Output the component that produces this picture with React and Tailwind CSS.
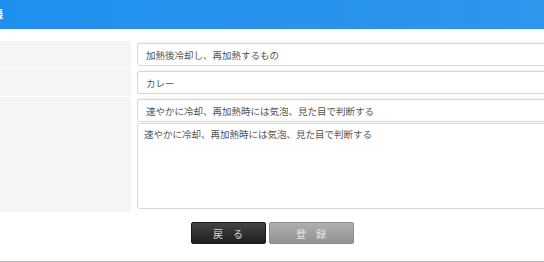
import { useState } from 'react';

const fieldClass =
    'block h-[23px] w-[420px] rounded-[3px] border border-[#d3d6da] bg-white px-[8px] text-[9.5px] leading-[21px] text-[#555] shadow-[0_-1px_0_#f4f2ec] outline-none';

export default function App() {
    const [kind, setKind] = useState('加熱後冷却し、再加熱するもの');
    const [food, setFood] = useState('カレー');
    const [method, setMethod] = useState('速やかに冷却、再加熱時には気泡、見た目で判断する');
    const [note, setNote] = useState('速やかに冷却、再加熱時には気泡、見た目で判断する');

    return (
        <div className="w-[544px] h-[262px] overflow-hidden bg-white font-['Noto_Sans_CJK_JP','Noto_Sans',sans-serif]">
            {/* Header */}
            <header className="h-[29px] bg-gradient-to-r from-[#2090ef] to-[#2e96eb] flex items-center overflow-hidden">
                <span className="ml-[-8px] text-[11px] font-bold text-white">録</span>
            </header>

            {/* Form */}
            <main className="mt-[12px]">
                <div className="flex border-b border-white">
                    <div className="w-[131px] shrink-0 bg-[#f5f5f5]" />
                    <div className="flex flex-col pl-[6px] py-[2px]">
                        <input className={fieldClass} value={kind} onChange={(e) => setKind(e.target.value)} />
                    </div>
                </div>
                <div className="flex border-b border-white">
                    <div className="w-[131px] shrink-0 bg-[#f5f5f5]" />
                    <div className="flex flex-col pl-[6px] py-[2px]">
                        <input className={fieldClass} value={food} onChange={(e) => setFood(e.target.value)} />
                    </div>
                </div>
                <div className="flex">
                    <div className="w-[131px] shrink-0 bg-[#f5f5f5]" />
                    <div className="flex flex-col gap-[1px] pl-[6px] pt-[2px] pb-[3px]">
                        <input className={fieldClass} value={method} onChange={(e) => setMethod(e.target.value)} />
                        <textarea
                            className="block h-[86px] w-[420px] resize-none rounded-[3px] border border-[#d3d6da] bg-white px-[6px] py-[3px] text-[9.5px] leading-[14px] text-[#555] outline-none"
                            value={note}
                            onChange={(e) => setNote(e.target.value)}
                        />
                    </div>
                </div>

                {/* Buttons */}
                <div className="mt-[10px] flex justify-center gap-[3px]">
                    <button className="h-[22px] w-[75px] rounded-[2px] border border-[#1a1a1a] bg-gradient-to-b from-[#444] to-[#1f1f1f] pl-[10px] text-[10px] tracking-[10px] text-[#d8d8d8]">
                        戻る
                    </button>
                    <button className="h-[22px] w-[85px] rounded-[2px] border border-[#8d8d8d] bg-gradient-to-b from-[#b0b0b0] to-[#929292] pl-[10px] text-[10px] tracking-[10px] text-[#e6e6e6]">
                        登録
                    </button>
                </div>
            </main>

            <div className="mt-[17px] h-[2px] bg-[#8ec6ee]" />
        </div>
    );
}
